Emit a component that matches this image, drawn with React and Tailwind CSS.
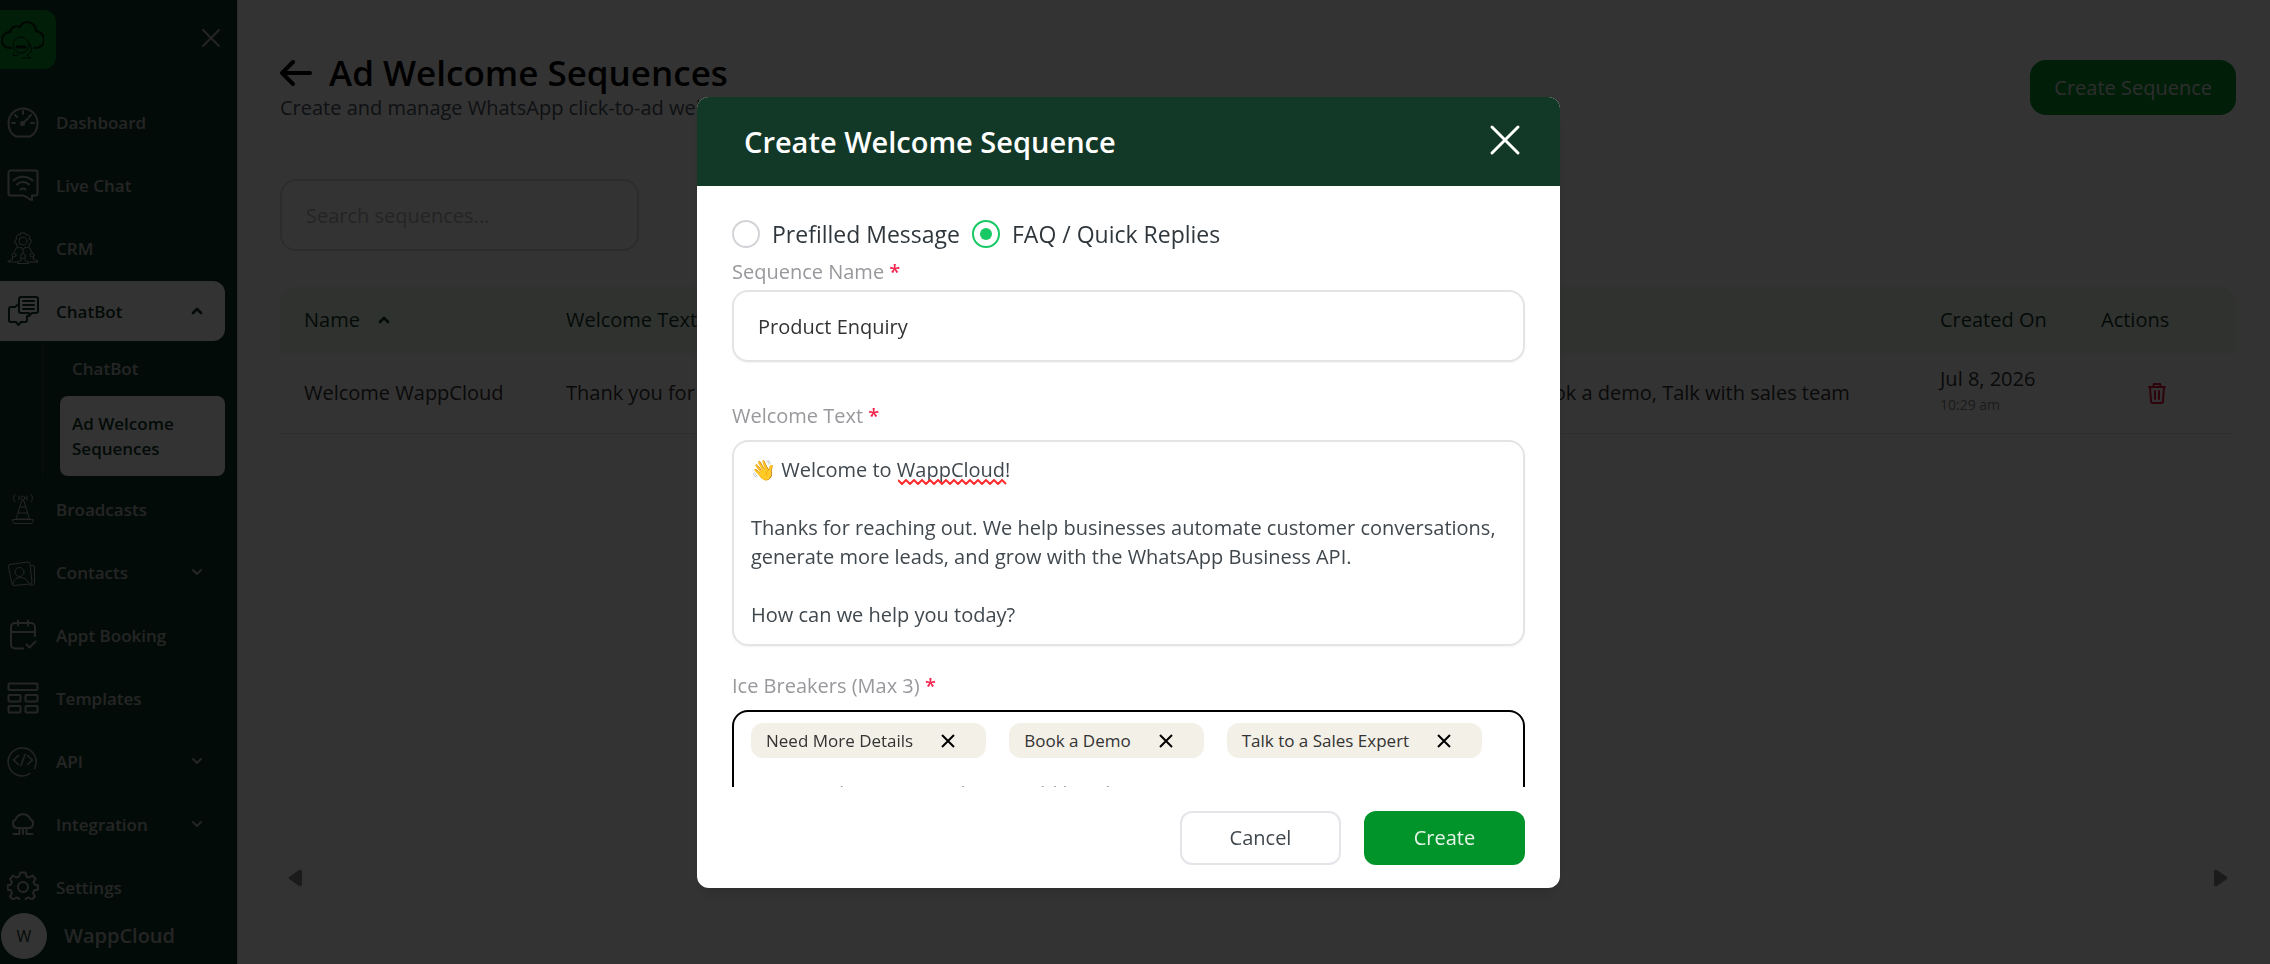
import { useState } from 'react';
import { ChevronDown, ChevronUp, X } from 'lucide-react';

function Icon({ children, width = 2 }) {
  return (
    <svg viewBox="0 0 32 32" className="size-8 shrink-0" fill="none" stroke="currentColor" strokeWidth={width}
      strokeLinecap="round" strokeLinejoin="round" aria-hidden="true">
      {children}
    </svg>
  );
}

const icons = {
  dashboard: (
    <Icon>
      <path d="M9 30.5C4 28 1.5 22.500 1.500 17a14.500 14.500 0 0 1 29 0c0 5.500-2.500 11-7.500 13.500Z" />
      <path d="M16 5v3M5 17h3M24 17h3M8 9l2 2M24 9l-2 2" />
      <path d="M15 18l6-5.500" />
      <circle cx="15.500" cy="17.500" r="1.500" fill="currentColor" />
    </Icon>
  ),
  chat: (
    <Icon>
      <path d="M3.500 1.500h25a2 2 0 0 1 2 2v21a2 2 0 0 1-2 2h-3.500v4.500c-4 0-5-4.500-9.500-4.500h-12a2 2 0 0 1-2-2v-21a2 2 0 0 1 2-2Z" />
      <path d="M6.500 11.500c5.500-5 13.500-5 19 0M10 15.500c3.500-3.200 8.500-3.200 12 0M13.500 20.500c1.500-1.200 3.500-1.200 5 0" />
    </Icon>
  ),
  crm: (
    <Icon width={1}>
      <path d="M14 1h4l1 2 2-.5 2 2.500-1 2 2 1v3l-2 1 .5 2-2.500 2-2-1-2 3-2-3-2 1-2.500-2 .5-2-2-1V8l2-1-1-2 2-2.500 2 .500Z" />
      <circle cx="16" cy="9" r="4" />
      <path d="M10 15l-3 5M22 15l3 5M16 18v3" />
      <circle cx="7" cy="23" r="2" /><circle cx="16" cy="24" r="2.500" /><circle cx="25" cy="23" r="2" />
      <path d="M5.500 24.500v3L1 29v1h9M26.500 24.500v3L31 29v1h-9M14 26v2.500L10.500 30v1.500h11V30L18 28.500V26" />
    </Icon>
  ),
  bot: (
    <Icon>
      <path d="M14 2h15a2 2 0 0 1 2 2v12a2 2 0 0 1-2 2h-4l-3 3v-3h-8a2 2 0 0 1-2-2V4a2 2 0 0 1 2-2Z" />
      <path d="M16 6h11M16 10h11M16 14h11" />
      <path d="M11.500 9L8 12H4a2 2 0 0 0-2 2v11a2 2 0 0 0 2 2h5l2.500 3 2.500-3h4a2 2 0 0 0 2-2v-4" />
    </Icon>
  ),
  broadcast: (
    <Icon width={1}>
      <circle cx="16" cy="5" r="2" />
      <path d="M12 3v4M20 3v4M8 1.500c-2 2-2 5.500 0 7.500M24 1.500c2 2 2 5.500 0 7.500" />
      <path d="M15 8h2l5.500 18h-13ZM13 14h6M11.500 20h9M6 26.500h20v2l-1 2H7l-1-2Z" />
    </Icon>
  ),
  contacts: (
    <Icon width={1}>
      <path d="M3 8.500l18-2.500a2 2 0 0 1 2 2l2 18a2 2 0 0 1-2 2L7 29.500a2 2 0 0 1-2-2L1.500 11a2 2 0 0 1 1.500-2.500Z" />
      <path d="M24 9.500h1.500a2 2 0 0 1 2 2v15.500a2 2 0 0 1-2 2H23" />
      <circle cx="12.500" cy="16" r="4.500" />
      <path d="M6 28c0-8 13-9 15.500-1" />
    </Icon>
  ),
  booking: (
    <Icon>
      <path d="M16 29.500H8a4 4 0 0 1-4-4V8a4 4 0 0 1 4-4h16a4 4 0 0 1 4 4v9M4 13h24M11 1.500v5M21 1.500v5M19.500 25.500l3 3 6-6" />
    </Icon>
  ),
  templates: (
    <Icon>
      <rect x="1.500" y="1.500" width="29" height="6.500" rx="1" />
      <rect x="1.500" y="13" width="12" height="6.500" rx="1" />
      <rect x="18.500" y="13" width="12" height="6.500" rx="1" />
      <rect x="1.500" y="24" width="12" height="6.500" rx="1" />
      <rect x="18.500" y="24" width="12" height="6.500" rx="1" />
    </Icon>
  ),
  api: (
    <Icon width={1.5}>
      <path d="M23 28.500a14 14 0 1 1 4.500-5" />
      <path d="M11.500 10.500L6.500 15l5 4.500M20.500 10.500l5 4.500-5 4.500M18 9.500l-4 11" />
    </Icon>
  ),
  integration: (
    <Icon>
      <path d="M9.500 20a4.500 4.500 0 0 1-1-8.500 8 8 0 0 1 15 0 4.500 4.500 0 0 1-1 8.500ZM12.500 20v6H6.500M16 20v6M19.500 20v6h6" />
    </Icon>
  ),
  settings: (
    <Icon>
      <circle cx="16" cy="16" r="5" />
      <path d="M13.500 1.500h5l1 4 2.500 1 3.500-2 3 3.500-2 3 1 2.500 3.500 1v4l-4 1-1 2.500 2 3.500-3 3-3.500-2-2.500 1-1 3.500h-5l-1-3.500-2.500-1-3.500 2-3-3 2-3.500-1-2.500-3.500-1v-4l3.500-1 1-2.500-2-3 3-3.500 3.500 2 2.500-1Z" />
    </Icon>
  ),
};

const navItems = [
  { label: 'Dashboard', icon: 'dashboard' },
  { label: 'Live Chat', icon: 'chat' },
  { label: 'CRM', icon: 'crm' },
  { label: 'ChatBot', icon: 'bot', open: true, children: ['ChatBot', 'Ad Welcome Sequences'] },
  { label: 'Broadcasts', icon: 'broadcast' },
  { label: 'Contacts', icon: 'contacts', more: true },
  { label: 'Appt Booking', icon: 'booking' },
  { label: 'Templates', icon: 'templates' },
  { label: 'API', icon: 'api', more: true },
  { label: 'Integration', icon: 'integration', more: true },
  { label: 'Settings', icon: 'settings' },
];

function Logo() {
  return (
    <span className="flex h-[59px] w-14 items-center rounded-r-xl bg-[#009429] text-[#06200f]">
      <svg viewBox="0 0 44 40" className="h-10 w-11" fill="none" stroke="currentColor" strokeWidth="2" strokeLinecap="round" aria-hidden="true">
        <path d="M11 28C4 28 2 24 2 20c0-5 4-8 8-8 1-5 6-7 10-5C22 2 27 1 31 3s5 5 5 8c5 1 8 4 8 9 0 5-4 8-10 8" />
        <circle cx="21" cy="25" r="8" strokeWidth="1" />
        <path d="M17 27h8" strokeWidth="3" />
        <path d="M14 33l-1 3 5-1M30 24c3 6 1 9-3 11l4 3h-9" strokeWidth="1" />
      </svg>
    </span>
  );
}

function Sidebar() {
  return (
    <aside className="flex h-screen w-[237px] shrink-0 flex-col bg-[#123828] text-[#b4b9b6]">
      <div className="flex h-[92px] shrink-0 items-start justify-between pt-[10px] pr-[10px]">
        <Logo />
        <button type="button" aria-label="Collapse menu" className="mt-3"><X size={32} strokeWidth={1.5} /></button>
      </div>
      <nav className="min-h-0 flex-1 overflow-hidden pr-3 text-[17px] leading-[25px] font-semibold">
        <ul className="flex flex-col gap-[3px]">
          {navItems.map((item) => (
            <li key={item.label}>
              <a
                href="#"
                className={item.open
                  ? 'flex h-[60px] items-center gap-[17px] rounded-r-xl bg-white pr-5 pl-[7px] text-[#123828]'
                  : 'flex h-[60px] items-center gap-[17px] pr-5 pl-[7px]'}
              >
                {icons[item.icon]}
                <span className="flex-1">{item.label}</span>
                {item.open && <ChevronUp size={16} strokeWidth={4} />}
                {item.more && <ChevronDown size={16} strokeWidth={3} />}
              </a>
              {item.children && (
                <ul className="ml-[42px] border-l border-white/10 pl-[17px]">
                  <li><a href="#" className="flex h-[55px] items-center px-3">{item.children[0]}</a></li>
                  <li>
                    <a href="#" className="flex h-20 items-center rounded-lg bg-white px-3 text-[#123828]">
                      {item.children[1]}
                    </a>
                  </li>
                </ul>
              )}
            </li>
          ))}
        </ul>
      </nav>
      <div className="flex h-16 shrink-0 items-center gap-[17px] pt-[7px] pl-px">
        <span className="flex size-[46px] items-center justify-center rounded-full bg-white text-[16px] text-[#123828]">W</span>
        <span className="text-[20px] font-semibold">WappCloud</span>
      </div>
    </aside>
  );
}

function TrashIcon() {
  return (
    <svg viewBox="0 0 20 22" className="h-[22px] w-5" fill="none" stroke="currentColor" strokeWidth="2" strokeLinecap="round" aria-hidden="true">
      <path d="M2 5h16M6 5l1-3h6l1 3M3 5l1 14a2 2 0 0 0 2 2h8a2 2 0 0 0 2-2l1-14M8 9v8M12 9v8" />
    </svg>
  );
}

function SequenceTable() {
  return (
    <table className="w-full table-fixed text-left text-[20px]">
      <colgroup>
        <col className="w-[262px]" />
        <col />
        <col className="w-[593px]" />
        <col className="w-[161px]" />
        <col className="w-[159px]" />
      </colgroup>
      <thead>
        <tr className="h-[66px] bg-[#f1f7ed] text-[#123828]">
          <th className="rounded-tl-2xl px-6 font-medium">
            <button type="button" className="flex items-center gap-4">
              Name <ChevronUp size={16} strokeWidth={4} />
            </button>
          </th>
          <th className="px-6 font-medium">Welcome Text</th>
          <th className="px-6 font-medium">Ice Breakers</th>
          <th className="px-6 font-medium">Created On</th>
          <th className="rounded-tr-2xl px-6 font-medium">Actions</th>
        </tr>
      </thead>
      <tbody>
        <tr className="h-20 border-b border-[#e8e8e8] text-[#333]">
          <td className="px-6">Welcome WappCloud</td>
          <td className="truncate px-6">Thank you for contacting us</td>
          <td className="px-6 whitespace-nowrap">Need more details, Book a demo, Talk with sales team</td>
          <td className="px-6 pb-1 whitespace-nowrap">
            <div className="leading-7">Jul 8, 2026</div>
            <div className="text-[14px] leading-6 text-[#888]">10:29 am</div>
          </td>
          <td className="px-6">
            <button type="button" aria-label="Delete sequence" className="ml-[46px] block text-[#e6143c]"><TrashIcon /></button>
          </td>
        </tr>
      </tbody>
    </table>
  );
}

function Label({ htmlFor, children }) {
  return (
    <label htmlFor={htmlFor} className="block text-[20px] leading-7 text-[#98989d]">
      {children} <span className="font-semibold text-[#f3254f]">*</span>
    </label>
  );
}

function TypeOption({ label, value, selected, onSelect }) {
  return (
    <label className="flex items-center gap-3 text-[23px] leading-8 text-[#2f373d]">
      <input
        type="radio"
        name="type"
        checked={selected === value}
        onChange={() => onSelect(value)}
        className="size-7 appearance-none rounded-full border-2 border-[#d4d4d8] bg-white bg-clip-content p-[6px] checked:border-[#17c964] checked:bg-[#17c964]"
      />
      {label}
    </label>
  );
}

const welcomeText = `👋 Welcome to WappCloud!

Thanks for reaching out. We help businesses automate customer conversations, generate more leads, and grow with the WhatsApp Business API.

How can we help you today?`;

function CreateModal() {
  const [type, setType] = useState('faq');
  const [breakers, setBreakers] = useState(['Need More Details', 'Book a Demo', 'Talk to a Sales Expert']);

  return (
    <div className="fixed inset-0 flex items-center justify-center bg-black/80 pt-[21px] pr-[13px]">
      <div role="dialog" aria-labelledby="modal-title" className="flex max-h-[82vh] w-full max-w-[863px] flex-col overflow-hidden rounded-xl bg-white shadow-lg">
        <header className="flex h-[89px] shrink-0 items-center justify-between bg-[#123828] pr-[35px] pb-px pl-[47px] text-white">
          <h2 id="modal-title" className="text-[29px] font-semibold">Create Welcome Sequence</h2>
          <button type="button" aria-label="Close">
            <svg viewBox="0 0 40 40" className="size-10" fill="none" stroke="currentColor" strokeWidth="3" strokeLinecap="round"><path d="M7 6l26 26M33 6L7 32" /></svg>
          </button>
        </header>

        <div className="min-h-0 flex-1 overflow-hidden px-[35px] pt-8">
          <div className="mb-2 flex gap-3">
            <TypeOption label="Prefilled Message" value="prefilled" selected={type} onSelect={setType} />
            <TypeOption label="FAQ / Quick Replies" value="faq" selected={type} onSelect={setType} />
          </div>

          <Label htmlFor="name">Sequence Name</Label>
          <input id="name" defaultValue="Product Enquiry"
            className="mt-1 mb-10 block h-[72px] w-full rounded-2xl border-2 border-[#e4e4e7] px-6 text-[20px] text-[#333] shadow-xs" />

          <Label htmlFor="welcome">Welcome Text</Label>
          <div className="relative mt-[10px] mb-[26px]">
            <textarea id="welcome" spellCheck={false} defaultValue={welcomeText}
              className="block h-[206px] w-full resize-none overflow-hidden rounded-2xl border-2 border-[#e4e4e7] px-[17px] py-[13px] text-[20px] leading-[29px] text-[#40484e] shadow-xs outline-none" />
            <svg viewBox="0 0 110 6" className="absolute top-[39px] left-[166px] h-[6px] w-[110px]" fill="none" stroke="#ff2a2a" strokeWidth="2" aria-hidden="true">
              <path d="M0 1l4 4 4-4 4 4 4-4 4 4 4-4 4 4 4-4 4 4 4-4 4 4 4-4 4 4 4-4 4 4 4-4 4 4 4-4 4 4 4-4 4 4 4-4 4 4 4-4 4 4 4-4 4 4" />
            </svg>
          </div>

          <Label htmlFor="breaker">Ice Breakers (Max 3)</Label>
          <div className="mt-[10px] rounded-2xl border-2 border-black px-[17px] pt-[11px] pb-4">
            <div className="flex flex-wrap gap-[23px]">
              {breakers.map((text) => (
                <span key={text} className="flex h-[35px] items-center gap-[27px] rounded-xl bg-[#f3f0e8] pr-[30px] pl-[15px] text-[17px] text-[#333]">
                  {text}
                  <button type="button" aria-label={`Remove ${text}`} onClick={() => setBreakers(breakers.filter((b) => b !== text))} className="text-black">
                    <svg viewBox="0 0 16 16" className="size-4" fill="none" stroke="currentColor" strokeWidth="2"><path d="M2 2l12 12M14 2L2 14" /></svg>
                  </button>
                </span>
              ))}
            </div>
            <input id="breaker" placeholder="Type and press Enter key to add breakers" className="mt-4 block h-[38px] w-full px-2 text-[20px] placeholder:text-[#98989d]" />
          </div>
        </div>

        <footer className="flex h-[101px] shrink-0 justify-end gap-[23px] px-[35px] pt-6 text-[20px]">
          <button type="button" className="h-[54px] w-[161px] rounded-xl border-2 border-[#e4e4e9] text-[#40484e]">Cancel</button>
          <button type="button" className="h-[54px] w-[161px] rounded-xl bg-[#00942a] font-medium text-[#e8f5ea]">Create</button>
        </footer>
      </div>
    </div>
  );
}

export default function App() {
  return (
    <div className="flex h-screen overflow-hidden bg-white font-['Open_Sans',sans-serif]">
      <Sidebar />
      <main className="flex min-w-0 flex-1 flex-col border-l border-[#ddd] pt-[50px] pr-[34px] pl-[42px]">
        <div className="flex items-start justify-between">
          <div>
            <h1 className="flex items-center gap-[17px] text-[35px] leading-[46px] font-semibold text-black">
              <a href="#" aria-label="Back">
                <svg viewBox="0 0 32 26" className="h-[26px] w-8" fill="none" stroke="currentColor" strokeWidth="4" strokeLinecap="round" strokeLinejoin="round">
                  <path d="M30 13H3M13 2L2 13l11 11" />
                </svg>
              </a>
              Ad Welcome Sequences
            </h1>
            <p className="text-[20px] leading-[23px] text-[#4b5563]">Create and manage WhatsApp click-to-ad welcome sequences</p>
          </div>
          <button type="button" className="mt-[10px] h-[55px] rounded-2xl bg-[#009429] px-6 text-[20px] text-[#e0e0e0]">Create Sequence</button>
        </div>
        <input aria-label="Search sequences" placeholder="Search sequences..."
          className="mt-[60px] mb-9 h-[72px] w-[359px] shrink-0 rounded-2xl border-2 border-[#dcdcde] px-6 text-[20px] placeholder:text-[#b4b4b4]" />
        <SequenceTable />
        <div className="mt-auto mb-[77px] flex items-center justify-between px-2 text-[#888]">
          <svg viewBox="0 0 14 18" className="h-[18px] w-[14px]" fill="currentColor"><path d="M1 8L11 1q3-1 3 2v12q0 3-3 2L1 10q-1-1 0-2Z" /></svg>
          <svg viewBox="0 0 14 18" className="h-[18px] w-[14px]" fill="currentColor"><path d="M13 8L3 1Q0 0 0 3v12q0 3 3 2l10-7q1-1 0-2Z" /></svg>
        </div>
      </main>
      <CreateModal />
    </div>
  );
}
